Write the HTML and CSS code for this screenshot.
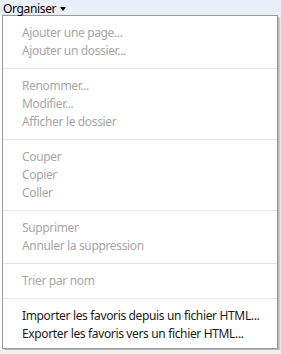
FILE: index.html
```html
<!DOCTYPE html>
<html lang="fr">
<head>
    <meta charset="UTF-8">
    <title>Organiser</title>
    <link rel="stylesheet" href="styles.css">
</head>
<body>
    <div class="toolbar">
        <span class="organise-btn">Organiser<span class="arrow"></span></span>
    </div>

    <div class="menu">
        <div class="menu-item disabled">Ajouter une page...</div>
        <div class="menu-item disabled">Ajouter un dossier...</div>
        <div class="separator"></div>
        <div class="menu-item disabled">Renommer...</div>
        <div class="menu-item disabled">Modifier...</div>
        <div class="menu-item disabled">Afficher le dossier</div>
        <div class="separator"></div>
        <div class="menu-item disabled">Couper</div>
        <div class="menu-item disabled">Copier</div>
        <div class="menu-item disabled">Coller</div>
        <div class="separator"></div>
        <div class="menu-item disabled">Supprimer</div>
        <div class="menu-item disabled">Annuler la suppression</div>
        <div class="separator"></div>
        <div class="menu-item disabled">Trier par nom</div>
        <div class="separator"></div>
        <div class="menu-item">Importer les favoris depuis un fichier HTML...</div>
        <div class="menu-item">Exporter les favoris vers un fichier HTML...</div>
    </div>

    <div class="bottom-strip"></div>
</body>
</html>
```

FILE: styles.css
```css
body {
    margin: 0;
    background: #ffffff;
    font-family: 'Noto Sans', 'Open Sans', sans-serif;
    font-size: 12px;
    letter-spacing: -0.35px;
    color: #1a1a1a;
    overflow: hidden;
}

.toolbar {
    height: 15px;
    background: #eaeef9;
    padding-left: 3px;
}

.organise-btn {
    display: inline-flex;
    align-items: center;
    line-height: 15px;
    color: #000;
}

.arrow {
    width: 0;
    height: 0;
    margin-left: 4px;
    margin-top: 1px;
    border-left: 3.5px solid transparent;
    border-right: 3.5px solid transparent;
    border-top: 4px solid #000;
}

.menu {
    margin-left: 2px;
    width: 274px;
    background: #ffffff;
    border: 1px solid #979797;
    padding: 8px 0 5px 0;
    box-shadow: 2px 2px 2px rgba(0, 0, 0, 0.3);
}

.menu-item {
    height: 18px;
    line-height: 18px;
    padding-left: 19px;
    white-space: nowrap;
}

.menu-item.disabled {
    color: #a6a6a6;
}

.separator {
    height: 1px;
    background: #e6e6e6;
    margin: 8px 0;
}

.bottom-strip {
    height: 20px;
    margin-top: 1px;
    background: #f0f0f0;
}
```
